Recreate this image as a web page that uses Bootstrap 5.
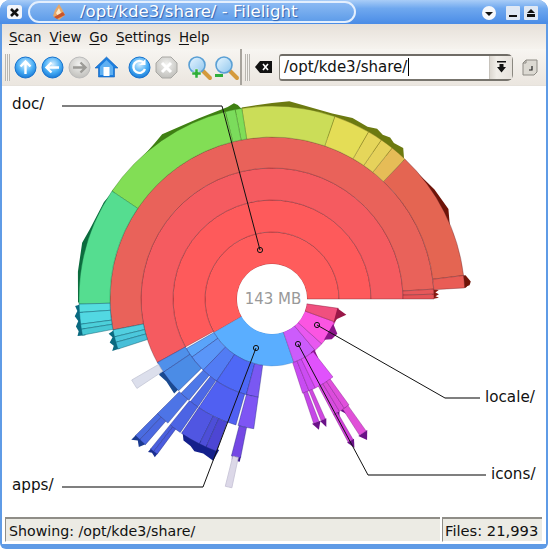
<!DOCTYPE html>
<html lang="en">
<head>
  <meta charset="UTF-8" />
  <meta name="viewport" content="width=device-width, initial-scale=1.0" />
  <title>Filelight</title>
  <link href="https://cdn.jsdelivr.net/npm/bootstrap@5.3.3/dist/css/bootstrap.min.css" rel="stylesheet">
  <style>
    html, body { background: #fff; overflow: hidden; }
    body { font-family: "DejaVu Sans", sans-serif; color: #111; }
    .kwin { width: 548px; height: 549px; background: #5f9be6; border-radius: 10px 10px 6px 6px; padding: 0 2px 5px; }
    .titlebar { height: 24px; margin: 0 -2px; border-radius: 10px 10px 0 0; background: linear-gradient(#a9cdf7, #6fa8ef 35%, #4a8ce6); color: #fff; font-size: 16.6px; line-height: 22px; padding: 0 6px; }
    .closebtn { width: 20px; height: 18px; }
    .titlepill { width: 328px; height: 22px; margin-left: 2px; border: 2px solid #e4effd; border-radius: 12px; padding-left: 20px; background: linear-gradient(#8ab9f3, #5f9de9); text-shadow: 1px 1px 1px #2a5fae; }
    .appbody { background: #f3efe9; }
    .menubar { height: 25px; background: linear-gradient(#e6e0d9, #f6f3ee); font-size: 13.4px; padding: 2px 7px 0; gap: 8px; line-height: 22px; }
    .menubar u { text-underline-offset: 2px; }
    .toolbar { height: 37px; background: linear-gradient(#f7f5f1, #ebe6df); border-bottom: 1px solid #e6e2dc; }
    .grip { width: 5px; height: 27px; margin-left: 3px; flex-shrink: 0; background: repeating-linear-gradient(90deg, #b9b6b0 0 1px, #f4f2ee 1px 2px); }
    .toolico { width: 27px; height: 27px; flex-shrink: 0; }
    .firstico { margin-left: 2px; }
    .icogap { margin-left: 6px; }
    .tbsep { width: 2px; height: 36px; background: #a7a39c; flex-shrink: 0; }
    .clearico { margin-left: 5px; flex-shrink: 0; }
    .combo { width: 234px; height: 27px; margin-left: 6px; border: 1px solid #8b8880; border-top: 2px solid #6f6c66; border-bottom: 2px solid #77746d; border-radius: 3px 6px 6px 3px; background: #fff; flex-shrink: 0; }
    .combotext { font-size: 15px; line-height: 22px; padding-left: 4px; width: 209px; color: #111; }
    .caretbar { border-right: 1px solid #000; padding-right: 1px; }
    .combobtn { width: 23px; background: linear-gradient(90deg, #dcd8d1, #f1eee9 30%, #e6e2dc); border-left: 1px solid #c7c3bc; }
    .upico { margin-left: 9px; flex-shrink: 0; }
    .canvaswrap { height: 430px; background: #fff; }
    .canvaswrap svg { display: block; }
    .maptext { font-family: "DejaVu Sans", sans-serif; font-size: 15.2px; fill: #111; }
    .mapsize { font-family: "DejaVu Sans", sans-serif; font-size: 15px; font-weight: 500; fill: #999; }
    .statusline { height: 27px; background: #fff; padding: 1px 2px 2px 3px; gap: 2px; font-size: 14.2px; }
    .statuscell { background: #ecebe4; border-top: 2px solid #8f8d87; border-left: 1px solid #8f8d87; border-bottom: 1px solid #fff; padding: 2px 2px 0 3px; line-height: 20px; white-space: nowrap; }
    .statusmain { width: 435px; }
    .statusfiles { width: 100px; font-size: 14.7px; padding-left: 2px; }
  </style>
</head>
<body class="m-0">

  <svg width="0" height="0" class="position-absolute">
    <defs>
      <radialGradient id="ballBlue" cx="50%" cy="35%" r="70%"><stop offset="0" stop-color="#d9f0ff"/><stop offset=".55" stop-color="#49aef5"/><stop offset="1" stop-color="#0f6fd0"/></radialGradient>
      <radialGradient id="ballGrey" cx="50%" cy="35%" r="70%"><stop offset="0" stop-color="#f2f2f0"/><stop offset="1" stop-color="#bdbcb8"/></radialGradient>
      <linearGradient id="lensFill" x1="0" y1="0" x2="1" y2="1"><stop offset="0" stop-color="#e8f6ff"/><stop offset="1" stop-color="#8fc6ee"/></linearGradient>
    </defs>
  </svg>

  <div class="kwin d-flex flex-column">
    <div class="titlebar d-flex align-items-center flex-shrink-0">
      <svg class="closebtn" viewBox="0 0 20 18"><rect x="1" y="2" width="15" height="14" rx="3" fill="#f4f6fa"/><path d="M5 6l7 7M12 6l-7 7" stroke="#111" stroke-width="2.6"/></svg>
      <div class="titlepill d-flex align-items-center">
        <svg width="18" height="18" viewBox="0 0 18 18" class="flex-shrink-0 me-2"><path d="M9 1l3 5 3 6-6 5-6-4 2-6z" fill="#e8a868"/><path d="M9 5l2 5-3 3-2-3z" fill="#fbe9c8"/><path d="M4 14l9-5 2 3-8 4z" fill="#c8542c"/></svg>
        <span class="ms-1">/opt/kde3/share/ - Filelight</span>
      </div>
      <svg width="80" height="18" viewBox="0 0 80 18" class="ms-auto"><circle cx="27" cy="10" r="7" fill="#f6f8fb"/><path d="M23 9h8l-4 4z" fill="#111"/><rect x="44" y="3" width="14" height="14" rx="1" fill="#dfe8f4"/><rect x="47" y="12" width="8" height="2" fill="#111"/><rect x="62" y="3" width="14" height="14" rx="1" fill="#dfe8f4"/><path d="M65 10l4-4 4 4zM65 11h8v3h-8z" fill="#111"/></svg>
    </div>

    <div class="appbody flex-grow-1 d-flex flex-column">
      <div class="menubar d-flex align-items-center flex-shrink-0">
        <span><u>S</u>can</span><span><u>V</u>iew</span><span><u>G</u>o</span><span><u>S</u>ettings</span><span><u>H</u>elp</span>
      </div>

      <div class="toolbar d-flex align-items-center flex-shrink-0">
        <div class="grip"></div>
        <svg class="toolico firstico" viewBox="0 0 27 27"><circle cx="13.5" cy="13.5" r="10.5" fill="url(#ballBlue)" stroke="#1671cc"/><path d="M13.5 20V8M8.5 12.5l5-5 5 5" fill="none" stroke="#fff" stroke-width="2.4"/></svg>
        <svg class="toolico" viewBox="0 0 27 27"><circle cx="13.5" cy="13.5" r="10.5" fill="url(#ballBlue)" stroke="#1671cc"/><path d="M20 13.5H8M12.5 8.5l-5 5 5 5" fill="none" stroke="#fff" stroke-width="2.4"/></svg>
        <svg class="toolico" viewBox="0 0 27 27"><circle cx="13.5" cy="13.5" r="10.5" fill="url(#ballGrey)" stroke="#bbb"/><path d="M7 13.5h12M14.5 8.5l5 5-5 5" fill="none" stroke="#9c9b97" stroke-width="2.4"/></svg>
        <svg class="toolico" viewBox="0 0 27 27"><path d="M13.5 3L2 14h3.5v9h16v-9H25z" fill="#1d7fe0" stroke="#0f5fb8" stroke-width=".6"/><path d="M13.5 6L7 12.5V21h13v-8.500z" fill="#5fb0f2"/><rect x="10.500" y="13" width="6" height="9" fill="#fff"/></svg>
        <svg class="toolico icogap" viewBox="0 0 27 27"><circle cx="13.5" cy="13.5" r="10.5" fill="url(#ballBlue)" stroke="#1671cc"/><path d="M19 15a6 6 0 1 1-1-6" fill="none" stroke="#fff" stroke-width="2.4"/><path d="M19.500 5v6h-6z" fill="#fff"/></svg>
        <svg class="toolico" viewBox="0 0 27 27"><path d="M9 3h9l6 6v9l-6 6H9l-6-6V9z" fill="url(#ballGrey)" stroke="#a9a8a4"/><path d="M9 9l9 9M18 9l-9 9" stroke="#fff" stroke-width="3"/></svg>
        <svg class="toolico icogap" viewBox="0 0 27 27"><path d="M16 16l8 8" stroke="#d49a3c" stroke-width="4" stroke-linecap="round"/><circle cx="11" cy="11" r="8" fill="url(#lensFill)" stroke="#5a9fd4" stroke-width="1.6"/><path d="M6 18h3v-3h3v3h3v3h-3v3H9v-3H6z" fill="#2fae3a" stroke="#e8f5e8" stroke-width=".5"/></svg>
        <svg class="toolico" viewBox="0 0 27 27"><path d="M16 16l8 8" stroke="#d49a3c" stroke-width="4" stroke-linecap="round"/><circle cx="11" cy="11" r="8" fill="url(#lensFill)" stroke="#5a9fd4" stroke-width="1.6"/><rect x="2" y="20" width="8" height="3" fill="#2fae3a"/></svg>
        <div class="tbsep"></div>
        <div class="grip"></div>
        <svg width="18" height="14" viewBox="0 0 18 14" class="clearico"><path d="M5 1h12v12H5L0 7z" fill="#111"/><path d="M8 4l5 6M13 4l-5 6" stroke="#fff" stroke-width="1.6"/></svg>
        <div class="combo d-flex">
          <div class="combotext overflow-hidden"><span class="caretbar">/opt/kde3/share/</span></div>
          <div class="combobtn flex-grow-1 d-flex align-items-center justify-content-center">
            <svg width="11" height="12" viewBox="0 0 11 12"><rect x="1" y="0" width="9" height="1.500" fill="#111"/><path d="M3.500 3h4v3H10l-4.500 5.500L1 6h2.500z" fill="#111"/></svg>
          </div>
        </div>
        <svg width="16" height="17" viewBox="0 0 16 17" class="upico"><path d="M1 4l3-3h11v12l-3 3H1z" fill="#dcd9d2" stroke="#8d8a84"/><path d="M4 1v3H1" fill="none" stroke="#8d8a84"/><path d="M10 7v4H7" fill="none" stroke="#222" stroke-width="1.200"/></svg>
      </div>

      <div class="canvaswrap flex-shrink-0">
        <svg id="map" width="544" height="430" viewBox="2 85 544 430"></svg>
      </div>

      <div class="statusline d-flex flex-grow-1">
        <div class="statuscell statusmain">Showing: /opt/kde3/share/</div>
        <div class="statuscell statusfiles">Files: 21,993</div>
      </div>
    </div>
  </div>

  <script>
    // radial map, angles in degrees counter-clockwise from 3 o'clock
    const CX = 272, CY = 298;
    const NS = "http://www.w3.org/2000/svg";
    const map = document.getElementById("map");

    function pt(a, r) {
      const t = a * Math.PI / 180;
      return (CX + r * Math.cos(t)).toFixed(2) + " " + (CY - r * Math.sin(t)).toFixed(2);
    }
    function add(tag, attrs, text) {
      const el = document.createElementNS(NS, tag);
      for (const k in attrs) el.setAttribute(k, attrs[k]);
      if (text) el.textContent = text;
      map.appendChild(el);
      return el;
    }
    function seg(r0, r1, a0, a1, fill, stroke) {
      const big = Math.abs(a1 - a0) > 180 ? 1 : 0;
      const d = "M" + pt(a0, r0) + "A" + r0 + " " + r0 + " 0 " + big + " 0 " + pt(a1, r0) +
        "L" + pt(a1, r1) + "A" + r1 + " " + r1 + " 0 " + big + " 1 " + pt(a0, r1) + "Z";
      add("path", { d, fill, stroke: stroke || "rgba(90,30,40,.45)", "stroke-width": ".8" });
    }
    function spikes(points, fill) {
      add("polygon", { points: points.map(p => pt(p[0], p[1])).join(","), fill });
    }

    const R = [35, 67, 99, 131, 162, 193];

    // dark shells behind the outer ring
    spikes([[146, 192], [150, 194], [159, 195], [163.5, 198], [172, 196], [181, 194], [181, 190], [146, 190]], "#0c6b3e");
    spikes([[99, 192], [100, 197], [101, 199.5], [103, 197], [112, 195], [123.7, 198], [127, 195], [146, 193], [146, 190], [99, 190]], "#3f8012");
    spikes([[46.5, 192], [49, 200], [52, 198], [53.8, 200], [56, 198], [58.3, 200], [61, 197], [66, 198], [72, 195], [85, 198.5], [90, 196], [99, 194], [99, 190], [46.5, 190]], "#6c7a10");
    spikes([[7, 191], [4.6, 199], [3.3, 194], [3.3, 190], [20, 190], [27, 198], [34, 196], [46.5, 192], [46.5, 190], [7, 190]], "#6f1408");
    spikes([[181.5, 190], [182, 197], [183.5, 195], [185, 198], [186.5, 195], [188, 198], [189.5, 196], [190.8, 198], [191, 190]], "#0a6a80");
    spikes([[191, 160], [192, 167], [193.500, 164], [195, 168], [196.500, 165], [198, 168], [198, 160]], "#0a6a80");
    spikes([[0, 160], [0.4, 167], [1, 163.5], [1.6, 167], [2.3, 163.5], [3.1, 167], [3.5, 160]], "#8a1a12");
    spikes([[3.3, 190], [4, 198], [5, 199.5], [7, 195], [7, 190]], "#6f1408");

    // doc/
    seg(R[0], R[1], 0, 210, "#ff5c5c");
    seg(R[1], R[2], 0, 209, "#fe5a5b");
    seg(R[2], R[3], 0, 209, "#f55b60");
    seg(R[3], R[4], 3.5, 191, "#e9625a");
    seg(R[3], R[4], 1.7, 3.5, "#e6585a");
    seg(R[3], R[4], 0, 1.7, "#e55356");
    seg(R[4], R[5], 7, 46.5, "#e46552");
    seg(R[4], R[5], 3.3, 7, "#e95c55");
    seg(R[4], R[5], 46.5, 51.5, "#e6bc57", "rgba(120,110,30,.5)");
    seg(R[4], R[5], 51.5, 55.5, "#e6d25b", "rgba(120,110,30,.5)");
    seg(R[4], R[5], 55.5, 60, "#e5d65a", "rgba(120,110,30,.5)");
    seg(R[4], R[5], 60, 71, "#e4dd56", "rgba(120,110,30,.5)");
    seg(R[4], R[5], 71, 99, "#cbdd58", "rgba(110,120,30,.5)");
    seg(R[4], R[5], 99, 101, "#7fde58", "rgba(60,120,30,.5)");
    seg(R[4], R[5], 101, 104, "#7bdc5c", "rgba(60,120,30,.5)");
    seg(R[4], R[5], 104, 146, "#82de55", "rgba(60,120,30,.5)");
    seg(R[4], R[5], 146, 181.5, "#55dd90", "rgba(20,120,70,.5)");
    seg(R[4], R[5], 181.5, 184, "#55dde0", "rgba(10,90,110,.6)");
    seg(R[4], R[5], 184, 187.5, "#52d8e2", "rgba(10,90,110,.6)");
    seg(R[4], R[5], 187.5, 189, "#4cd0da", "rgba(10,90,110,.6)");
    seg(R[4], R[5], 189, 190.8, "#48c8d4", "rgba(10,90,110,.6)");
    seg(R[3], R[4], 191, 193.500, "#52cfe0", "rgba(10,90,110,.6)");
    seg(R[3], R[4], 193.500, 195.500, "#4cc8dc", "rgba(10,90,110,.6)");
    seg(R[3], R[4], 195.500, 198, "#48bfd8", "rgba(10,90,110,.6)");

    // apps/
    const blueLine = "rgba(30,40,120,.5)";
    spikes([[210, 130], [214, 136], [218, 134], [224, 136], [224, 130]], "#1a4a90");
    spikes([[225, 192], [225, 199], [226.500, 195], [228, 199], [229, 192]], "#1a3a90");
    spikes([[231, 192], [231, 197], [232, 195], [233.5, 197], [233.5, 192]], "#1a2f90");
    spikes([[236, 160], [238, 167], [241, 168], [243, 171], [246, 169], [250, 172], [250.7, 160]], "#14208c");
    spikes([[255.5, 160], [256, 166], [258.8, 166], [258.8, 160]], "#3a1a90");
    seg(R[0], R[1], 210, 289, "#5aaeff", "rgba(60,110,170,.35)");
    seg(R[1], R[2], 210, 216, "#5aa4fa", blueLine);
    seg(R[1], R[2], 216, 226, "#5a96f8", blueLine);
    seg(R[1], R[2], 226, 236, "#527cf4", blueLine);
    seg(R[1], R[2], 236, 255, "#4e68f6", blueLine);
    seg(R[1], R[2], 255, 262, "#7a58f2", blueLine);
    seg(R[2], R[3], 209, 214, "#4f90ea", blueLine);
    seg(R[2], R[3], 214, 224.5, "#4b8ce6", blueLine);
    seg(R[3], R[4], 210, 213.5, "#dcdfec", "#c4c7d6");
    seg(R[2], R[3], 226, 230.6, "#4e78e8", blueLine);
    seg(R[3], R[4], 225, 230, "#4d74e6", blueLine);
    seg(R[4], R[5], 225, 226.8, "#4a6ce0", blueLine);
    seg(R[4], R[5], 226.8, 229, "#4a68e0", blueLine);
    seg(R[2], R[3], 231.5, 235.5, "#4c68e6", blueLine);
    seg(R[3], R[4], 231, 235.5, "#4c64e4", blueLine);
    seg(R[4], R[5], 231, 232.2, "#4a60de", blueLine);
    seg(R[4], R[5], 232.2, 233.5, "#4a5cde", blueLine);
    seg(R[2], R[3], 236, 254, "#5060f2", blueLine);
    seg(R[3], R[4], 236, 243.4, "#5056e2", blueLine);
    seg(R[3], R[4], 243.4, 246, "#4d4ed8", blueLine);
    seg(R[3], R[4], 246, 250, "#4d46d4", blueLine);
    seg(R[2], R[3], 255, 262, "#7e55f4", blueLine);
    seg(R[3], R[4], 255.5, 258.8, "#7448e4", blueLine);
    seg(R[4], R[5], 256, 258, "#dcd8e8", "#c4c0d4");

    // icons/
    const pinkLine = "rgba(110,20,120,.45)";
    spikes([[287.8, 131], [289.7, 139], [291.7, 131]], "#6a1288");
    spikes([[291.5, 131], [293, 139], [294.5, 131]], "#6a1288");
    spikes([[297.6, 162], [299, 170], [300.4, 162]], "#6a1288");
    spikes([[302.2, 162], [304, 170], [306, 162]], "#6a1288");
    spikes([[298, 131], [299.5, 137], [301, 131]], "#6a1288");
    spikes([[301.5, 131], [303, 137], [304.5, 131]], "#6a1288");
    seg(R[0], R[1], 289, 310, "#cc5cfb", pinkLine);
    seg(R[0], R[1], 310, 318, "#e858f0", pinkLine);
    seg(R[0], R[1], 318, 340, "#fb55e2", pinkLine);
    seg(R[0], R[1], 340, 352, "#f0507f", "rgba(120,20,50,.5)");
    spikes([[352, 66], [348, 76], [343, 68], [338, 66]], "#9a1848");
    spikes([[338, 66], [332, 74], [326, 72], [322, 66]], "#8a1488");
    spikes([[310, 66], [308, 75], [303, 74], [306, 66]], "#8a1488");
    seg(R[1], R[2], 288, 292, "#c84cf2", pinkLine);
    seg(R[1], R[2], 292, 296, "#cc4cf2", pinkLine);
    seg(R[1], R[2], 296, 308, "#e052fc", pinkLine);
    seg(R[2], R[3], 298, 301, "#d84ce0", pinkLine);
    seg(R[2], R[3], 301, 303.5, "#dc4cdc", pinkLine);
    seg(R[2], R[3], 303.5, 306, "#e050dc", pinkLine);
    seg(R[2], R[3], 288.5, 291, "#c548e8", pinkLine);
    seg(R[2], R[3], 292, 294, "#cf48e0", pinkLine);
    seg(R[3], R[4], 298, 300, "#d040d8", pinkLine);
    seg(R[3], R[4], 302.7, 305.5, "#e050d8", pinkLine);

    // middle hole
    add("circle", { cx: CX, cy: CY, r: R[0], fill: "#fff" });
    add("text", { x: CX + 1, y: CY + 5, "text-anchor": "middle", class: "mapsize" }, "143 MB");

    // label leaders
    const leaders = [
      { name: "doc/", x: 12, y: 108, line: [[62, 105], [222, 105], [260, 249]] },
      { name: "apps/", x: 12, y: 489, line: [[62, 486], [203, 486], [256, 347]] },
      { name: "locale/", x: 485, y: 401, line: [[480, 397], [445, 397], [317, 324]] },
      { name: "icons/", x: 491, y: 478, line: [[486, 474], [368, 474], [298, 343]] }
    ];
    leaders.forEach(l => {
      add("line", { x1: l.line[0][0], y1: l.line[0][1], x2: l.line[1][0], y2: l.line[1][1], stroke: "#555", "stroke-width": "1.4" });
      add("line", { x1: l.line[1][0], y1: l.line[1][1], x2: l.line[2][0], y2: l.line[2][1], stroke: "#111", "stroke-width": "1" });
      add("circle", { cx: l.line[2][0], cy: l.line[2][1], r: 2.6, fill: "none", stroke: "#111", "stroke-width": "1" });
      add("text", { x: l.x, y: l.y, class: "maptext" }, l.name);
    });
  </script>
  <script src="https://cdn.jsdelivr.net/npm/bootstrap@5.3.3/dist/js/bootstrap.bundle.min.js"></script>
</body>
</html>
